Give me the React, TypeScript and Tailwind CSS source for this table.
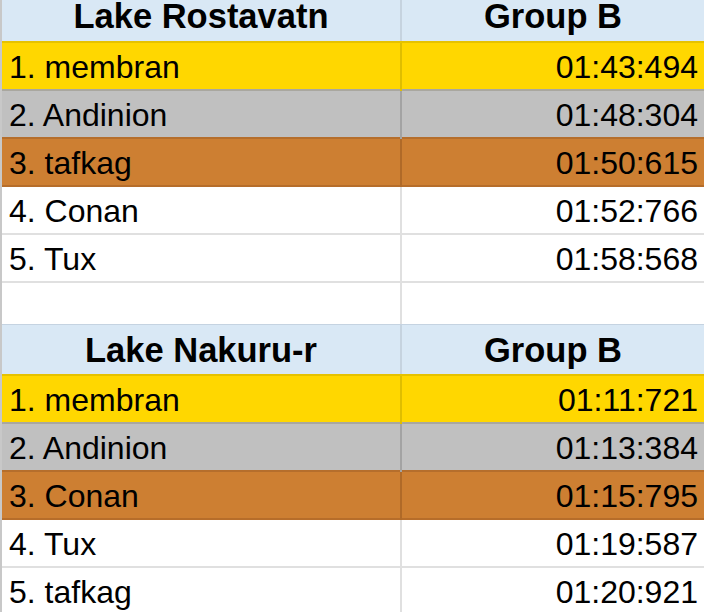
const font = { fontFamily: '"Liberation Sans", Arial, sans-serif' }

type Row = { name: string; time: string }

const tables: { track: string; group: string; rows: Row[] }[] = [
  {
    track: 'Lake Rostavatn',
    group: 'Group B',
    rows: [
      { name: '1. membran', time: '01:43:494' },
      { name: '2. Andinion', time: '01:48:304' },
      { name: '3. tafkag', time: '01:50:615' },
      { name: '4. Conan', time: '01:52:766' },
      { name: '5. Tux', time: '01:58:568' },
    ],
  },
  {
    track: 'Lake Nakuru-r',
    group: 'Group B',
    rows: [
      { name: '1. membran', time: '01:11:721' },
      { name: '2. Andinion', time: '01:13:384' },
      { name: '3. Conan', time: '01:15:795' },
      { name: '4. Tux', time: '01:19:587' },
      { name: '5. tafkag', time: '01:20:921' },
    ],
  },
]

// podium colours: bg + bottom line
const rowStyles = [
  'bg-[#ffd700] border-[#a9a79f]',
  'bg-[#c0c0c0] border-[#b56e2c]',
  'bg-[#cd7f32] border-[#b66d2a]',
  'bg-white border-[#e0e0e0]',
  'bg-white border-[#e0e0e0]',
]
const dividerStyles = ['border-[#dfbe00]', 'border-[#a3a3a3]', 'border-[#b06a28]', 'border-[#e0e0e0]', 'border-[#e0e0e0]']

function Header({ track, group, first }: { track: string; group: string; first?: boolean }) {
  return (
    <div
      className={`grid h-[52px] grid-cols-[400px_1fr] border-b-2 border-[#e6c200] bg-[#d9e8f5] text-[34.5px] leading-[30px] font-bold ${
        first ? '' : 'border-t border-t-[#c5d3e1]'
      }`}
    >
      <div className="flex items-center justify-center border-r-2 border-[#c6d3df]">{track}</div>
      <div className="flex items-center justify-center">{group}</div>
    </div>
  )
}

function ResultRow({ row, index }: { row: Row; index: number }) {
  return (
    <div className={`grid h-[48px] grid-cols-[400px_1fr] border-b-2 text-[32px] ${rowStyles[index]}`}>
      <div className={`flex items-center border-r-2 pl-[7px] ${dividerStyles[index]}`}>{row.name}</div>
      <div className="flex items-center justify-end pr-[6px]">{row.time}</div>
    </div>
  )
}

export default function App() {
  return (
    <div className="h-[612px] w-[704px] overflow-hidden bg-white text-black" style={font}>
      <div className="-mt-[9px] border-l-2 border-[#c8c8c8]">
        <Header track={tables[0].track} group={tables[0].group} first />
        {tables[0].rows.map((row, i) => (
          <ResultRow key={row.name} row={row} index={i} />
        ))}
        <div className="grid h-[41px] grid-cols-[400px_1fr]">
          <div className="border-r-2 border-[#e0e0e0]" />
          <div />
        </div>
        <Header track={tables[1].track} group={tables[1].group} />
        {tables[1].rows.map((row, i) => (
          <ResultRow key={row.name} row={row} index={i} />
        ))}
      </div>
    </div>
  )
}
